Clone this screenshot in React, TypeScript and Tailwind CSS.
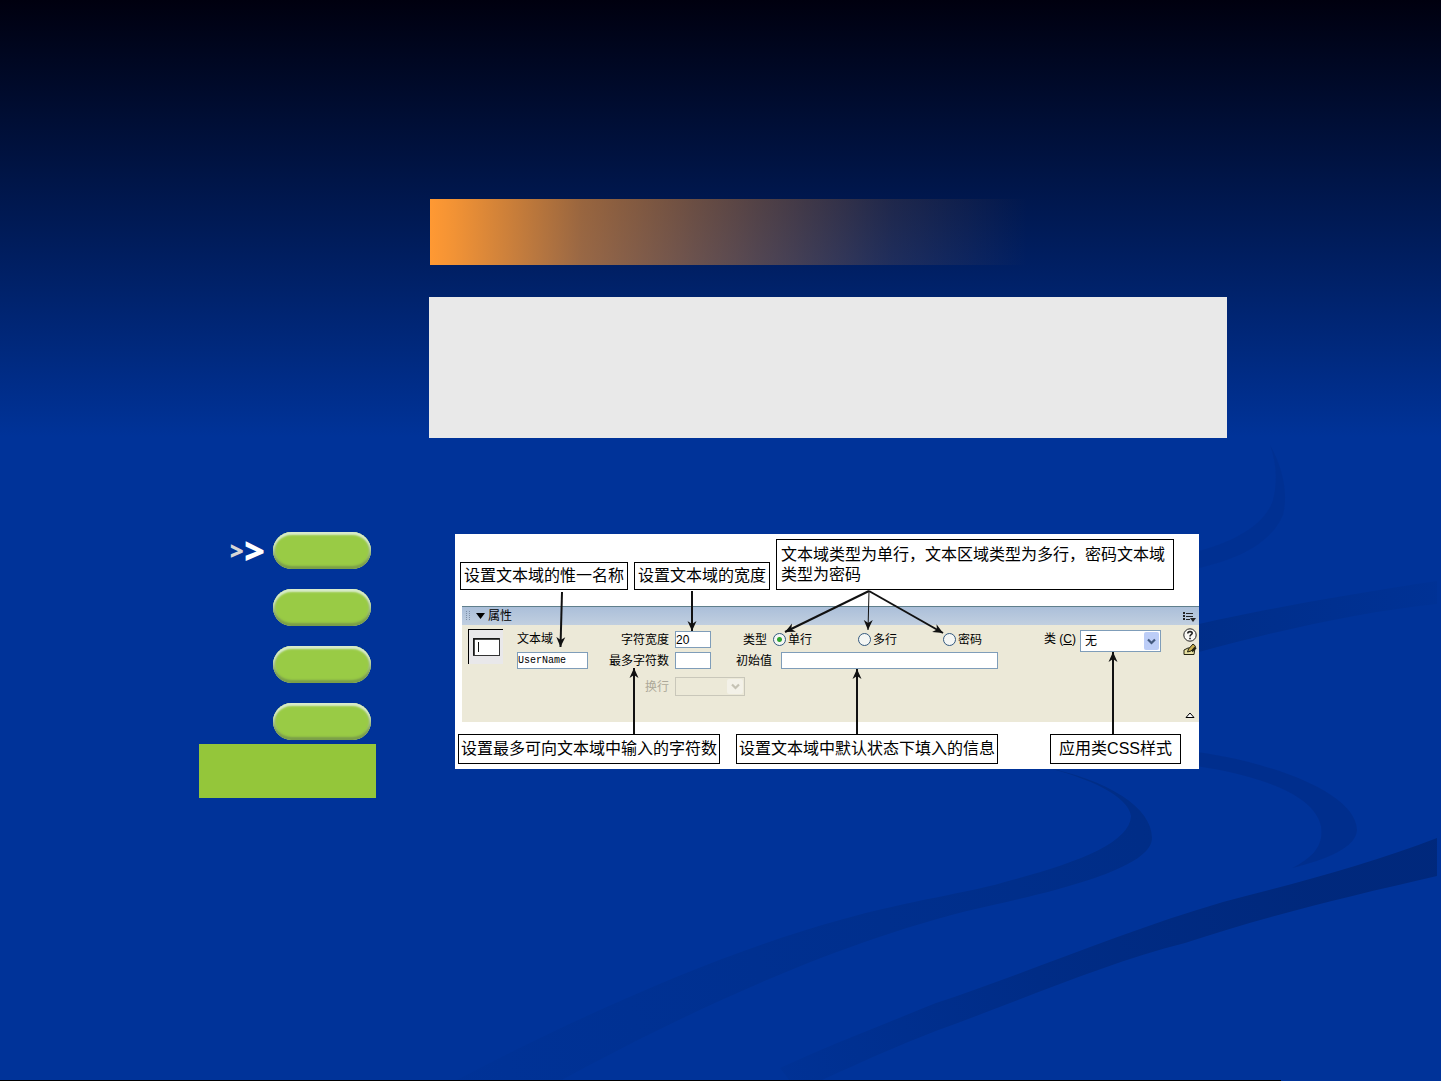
import type { ReactNode } from "react";

const navItems = ["第一项", "第二项", "第三项", "第四项"];
const fieldTypes = ["单行", "多行", "密码"];

function Backdrop() {
  return (
    <svg
      aria-hidden="true"
      className="absolute inset-0 h-full w-full"
      viewBox="0 0 1441 1081"
      preserveAspectRatio="none"
    >
      <defs>
        <linearGradient id="fadeLong" gradientUnits="userSpaceOnUse" x1="780" y1="1080" x2="1300" y2="880">
          <stop offset="0" stopColor="#001a55" stopOpacity="0.05" />
          <stop offset="0.5" stopColor="#001a55" stopOpacity="0.28" />
          <stop offset="1" stopColor="#001a55" stopOpacity="0.42" />
        </linearGradient>
        <linearGradient id="fadeHook" gradientUnits="userSpaceOnUse" x1="470" y1="1060" x2="1150" y2="830">
          <stop offset="0" stopColor="#002060" stopOpacity="0.04" />
          <stop offset="0.5" stopColor="#002060" stopOpacity="0.18" />
          <stop offset="1" stopColor="#002060" stopOpacity="0.32" />
        </linearGradient>
        <linearGradient id="fadeStrip" gradientUnits="userSpaceOnUse" x1="1200" y1="0" x2="1441" y2="0">
          <stop offset="0" stopColor="#002060" stopOpacity="0.28" />
          <stop offset="1" stopColor="#002060" stopOpacity="0.06" />
        </linearGradient>
      </defs>
      <path
        fill="url(#fadeLong)"
        d="M1437 838C1370 864 1300 882 1223 902C1120 932 1020 976 936 1003C880 1026 830 1045 780 1068L790 1081H820C870 1058 910 1040 955 1024C1030 996 1110 962 1185 943C1270 915 1350 896 1437 876Z"
      />
      <path
        fill="url(#fadeHook)"
        d="M1040 766C1110 780 1152 808 1152 838C1152 866 1070 888 993 905C850 936 690 1010 560 1081H455C590 1010 730 950 840 920C910 900 970 893 1012 880C1080 862 1130 842 1131 816C1128 796 1090 778 1040 766Z"
      />
      <path
        fill="#002060"
        fillOpacity="0.2"
        d="M1180 750C1260 758 1356 790 1357 830C1356 848 1325 860 1292 868C1312 858 1324 846 1321 826C1314 792 1250 772 1180 764Z"
      />
      <path
        fill="url(#fadeStrip)"
        d="M1199 624C1270 608 1350 594 1437 581V604C1360 612 1280 630 1199 652Z"
      />
      <path
        fill="#002060"
        fillOpacity="0.12"
        d="M1270 445C1284 470 1288 495 1283 515C1270 545 1235 560 1199 568V551C1235 541 1265 525 1273 500C1278 480 1276 462 1270 445Z"
      />
      <rect x="0" y="1080" width="1281" height="1" fill="#000000" />
    </svg>
  );
}

function Callout({ className = "", children }: { className?: string; children: ReactNode }) {
  return (
    <p className={`border border-black bg-white text-base leading-5 text-black ${className}`}>
      {children}
    </p>
  );
}

function ArrowHead({ id }: { id: string }) {
  return (
    <defs>
      <marker id={id} markerUnits="userSpaceOnUse" markerWidth="12" markerHeight="12" refX="10" refY="5" orient="auto">
        <path d="M0 0.500L10 5L0 9.500L3 5Z" fill="#111111" stroke="none" />
      </marker>
    </defs>
  );
}

function SelectArrow({ disabled = false }: { disabled?: boolean }) {
  return (
    <span
      className={`pointer-events-none absolute inset-y-[2px] right-[2px] flex items-center justify-center rounded-xs ${
        disabled ? "w-4 bg-[#f3f1e8]" : "w-[15px] bg-[#bccdf7]"
      }`}
    >
      <svg width="9" height="7" viewBox="0 0 9 7" fill="none">
        <path d="M1 1.500L4.500 5L8 1.500" stroke={disabled ? "#c5c2b4" : "#43597e"} strokeWidth="2.200" />
      </svg>
    </span>
  );
}

function PropertyPanel() {
  return (
    <section className="ml-[7px] text-xs leading-4 text-black">
      <header className="flex h-[19px] items-center border-t border-[#607f8c] bg-linear-to-b from-[#abbfd9] to-[#c1cfe0] pr-[3px] pl-1">
        <svg width="5" height="11" viewBox="0 0 5 11" fill="#7e8fa6">
          {[0, 2, 4, 6, 8].map((y) => (
            <path key={y} d={`M0 ${y}h1v1H0zM3 ${y}h1v1H3z`} />
          ))}
        </svg>
        <svg className="ml-[5px]" width="9" height="6" viewBox="0 0 9 6">
          <path d="M0 0H9L4.500 6Z" fill="#000000" />
        </svg>
        <h2 className="ml-[3px]">属性</h2>
        <svg className="ml-auto" width="13" height="11" viewBox="0 0 13 11" fill="#222222">
          <path d="M0 1h2v2H0zM0 4h2v2H0zM0 7h2v2H0zM3 2h7v1H3zM3 5h7v1H3zM3 8h4v1H3zM7 7h6l-3 4z" />
        </svg>
      </header>

      <div className="flex items-start bg-[#ece9d8] pl-1.5">
        <div className="mt-1 flex h-[35px] w-[35px] items-center justify-center border-t border-l border-black bg-[#e9e8ea]">
          <svg width="27" height="18" viewBox="0 0 27 18">
            <rect x="0.500" y="0.500" width="26" height="17" fill="#ffffff" stroke="#333333" />
            <path d="M1 17V1H26" fill="none" stroke="#111111" strokeWidth="1.500" />
            <path d="M5.500 4V14" stroke="#111111" />
          </svg>
        </div>

        <div className="mt-1.5 ml-3.5 flex flex-col gap-1">
          <label htmlFor="fieldName" className="h-[17px]">
            文本域
          </label>
          <input
            id="fieldName"
            defaultValue="UserName"
            className="h-[17px] w-[71px] border border-[#7f9db9] bg-white font-['Liberation_Mono',monospace] text-[10px]"
          />
        </div>

        <div className="mt-1.5 mb-[26px] ml-[21px] flex flex-col">
          <div className="flex h-[17px] items-center">
            <label htmlFor="charWidth" className="mr-1.5 w-[60px] text-right">
              字符宽度
            </label>
            <input
              id="charWidth"
              defaultValue="20"
              className="h-[17px] w-9 border border-[#7f9db9] bg-white"
            />
            <span id="typeLabel" className="mr-1.5 w-14 text-right">
              类型
            </span>
            <div role="radiogroup" aria-labelledby="typeLabel" className="flex items-center gap-[46px]">
              {fieldTypes.map((type, i) => (
                <label key={type} className="flex items-center gap-[2px]">
                  <input
                    type="radio"
                    name="fieldType"
                    defaultChecked={i === 0}
                    className="size-[13px] appearance-none rounded-full border border-[#33597f] bg-[#f4f6f4] checked:bg-[radial-gradient(circle,#2fa52f_0,#2fa52f_2px,#f4f6f4_3px)]"
                  />
                  {type}
                </label>
              ))}
            </div>
          </div>
          <div className="mt-1 flex h-[17px] items-center">
            <label htmlFor="maxChars" className="mr-1.5 w-[60px] text-right">
              最多字符数
            </label>
            <input id="maxChars" className="h-[17px] w-9 border border-[#7f9db9] bg-white" />
            <label htmlFor="initial" className="mr-[9px] w-[61px] text-right">
              初始值
            </label>
            <input id="initial" className="h-[17px] w-[217px] border border-[#7f9db9] bg-white px-px" />
          </div>
          <div className="mt-2 flex h-[19px] items-center">
            <label htmlFor="wrap" className="mr-1.5 w-[60px] text-right text-[#aca899]">
              换行
            </label>
            <div className="relative">
              <select
                id="wrap"
                disabled
                className="block h-[19px] w-[70px] appearance-none border border-[#c9c7ba] bg-[#ece9d8] opacity-100"
              />
              <SelectArrow disabled />
            </div>
          </div>
        </div>

        <div className="mt-[5px] mr-[22px] ml-auto flex items-center gap-1">
          <label htmlFor="cssClass" className="-mt-1 whitespace-nowrap">
            类 (<u>C</u>)
          </label>
          <div className="relative">
            <select
              id="cssClass"
              className="block h-[22px] w-[81px] appearance-none border border-[#7f9db9] bg-white pl-1"
            >
              <option>无</option>
            </select>
            <SelectArrow />
          </div>
        </div>

        <div className="mr-[2px] flex w-3.5 flex-col items-center self-stretch pt-[3px] pb-1">
          <button type="button" aria-label="帮助">
            <svg className="block" width="14" height="14" viewBox="0 0 14 14" fill="none" stroke="#222222">
              <circle cx="7" cy="7" r="6.200" fill="#faf9f5" />
              <path d="M4.800 5.500C4.800 3 9.300 3 9.200 5.300C9.100 6.800 7 6.700 7 8.500" strokeWidth="1.600" />
              <path d="M7 9.700V11.200" strokeWidth="1.700" />
            </svg>
          </button>
          <button type="button" aria-label="编辑">
            <svg className="block" width="14" height="14" viewBox="0 0 14 14" stroke="#222211">
              <path d="M1 8L5 6H12L11 12.500H1Z" fill="#e6dfa0" />
              <path d="M4.500 10L5.500 7L10 2L12.500 4.200L8 9Z" fill="#c8ae4e" />
              <path d="M9 9.500L13 5.500" strokeWidth="1.800" />
            </svg>
          </button>
          <button type="button" aria-label="收起" className="mt-auto">
            <svg className="block" width="10" height="6" viewBox="0 0 10 6">
              <path d="M1 5.500L5 1L9 5.500Z" fill="#ffffff" stroke="#000000" />
            </svg>
          </button>
        </div>
      </div>
    </section>
  );
}

function Diagram() {
  return (
    <figure className="relative mr-7 ml-[26px] bg-white">
      <div className="mb-4 flex items-end gap-1.5 pt-[5px] pl-[5px]">
        <Callout className="shrink-0 px-[3px] py-[3px]">设置文本域的惟一名称</Callout>
        <Callout className="shrink-0 px-[3px] py-[3px]">设置文本域的宽度</Callout>
        <Callout className="mr-[25px] flex-1 px-1 pt-[5px] pb-1">
          文本域类型为单行，文本区域类型为多行，密码文本域类型为密码
        </Callout>
      </div>

      <PropertyPanel />

      <div className="flex gap-4 pt-3 pr-[18px] pb-[5px] pl-[3px]">
        <Callout className="px-0.5 py-1">设置最多可向文本域中输入的字符数</Callout>
        <Callout className="px-0.5 py-1">设置文本域中默认状态下填入的信息</Callout>
        <Callout className="ml-auto px-2 py-1">应用类CSS样式</Callout>
      </div>

      {/* arrows from the callouts to their controls */}
      <svg
        aria-hidden="true"
        className="pointer-events-none absolute top-0 left-0"
        width="560"
        height="235"
        viewBox="0 0 560 235"
        fill="none"
        stroke="#111111"
        strokeWidth="2"
      >
        <ArrowHead id="headLeft" />
        <path markerEnd="url(#headLeft)" d="M107 58L105.500 113" />
        <path markerEnd="url(#headLeft)" d="M237 57V97" />
        <path markerEnd="url(#headLeft)" d="M414 57L330 98" />
        <path markerEnd="url(#headLeft)" strokeWidth="1" d="M414 57L413 96" />
        <path markerEnd="url(#headLeft)" d="M414 57L488 99" />
        <path markerEnd="url(#headLeft)" d="M179 200V134" />
        <path markerEnd="url(#headLeft)" d="M402 200V135" />
      </svg>
      <svg
        aria-hidden="true"
        className="pointer-events-none absolute top-0 right-0"
        width="100"
        height="235"
        viewBox="0 0 100 235"
        fill="none"
        stroke="#111111"
        strokeWidth="2"
      >
        <ArrowHead id="headRight" />
        <path markerEnd="url(#headRight)" d="M14 200V118" />
      </svg>
    </figure>
  );
}

export default function App() {
  return (
    <div className="relative min-h-screen bg-[#003399] bg-[linear-gradient(to_bottom,#00000f_0,#003399_437px)] font-['Liberation_Sans','Noto_Sans_CJK_SC',sans-serif]">
      <Backdrop />
      <div className="relative flex items-start gap-[53px] pt-[199px] pr-[214px] pl-[199px]">
        <aside className="w-[177px] shrink-0 pt-[333px]">
          <nav className="flex flex-col items-end gap-5 pr-[5px]">
            {navItems.map((item, i) => (
              <div key={item} className="flex h-[37px] items-center gap-2">
                {i === 0 && (
                  <span className="flex items-center font-['Open_Sans',sans-serif] font-extrabold">
                    <span className="text-2xl leading-none text-[#d6d6d6]">&gt;</span>
                    <span className="text-4xl leading-none text-white">&gt;</span>
                  </span>
                )}
                <button
                  type="button"
                  aria-label={item}
                  className="h-[37px] w-[98px] rounded-full bg-[#99cb45] shadow-[inset_0_3px_2px_#d9eccb,inset_0_-3px_2px_#7a9f48,inset_2px_0_2px_#a9c39a,inset_-2px_0_2px_#a9c39a]"
                />
              </div>
            ))}
          </nav>
          <div className="mt-1 h-[54px] bg-[#94c63a]" />
        </aside>

        <main className="min-w-0 flex-1">
          <div className="ml-px h-[66px] bg-[linear-gradient(to_right,#ff9933_0%,#ff9933f2_3%,#ff993399_19%,#ff99336b_33%,#ff99331f_58%,#ff993300_75%)]" />
          <div className="mt-8 mb-24 h-[141px] bg-[#e9e9e9]" />
          <Diagram />
        </main>
      </div>
    </div>
  );
}
